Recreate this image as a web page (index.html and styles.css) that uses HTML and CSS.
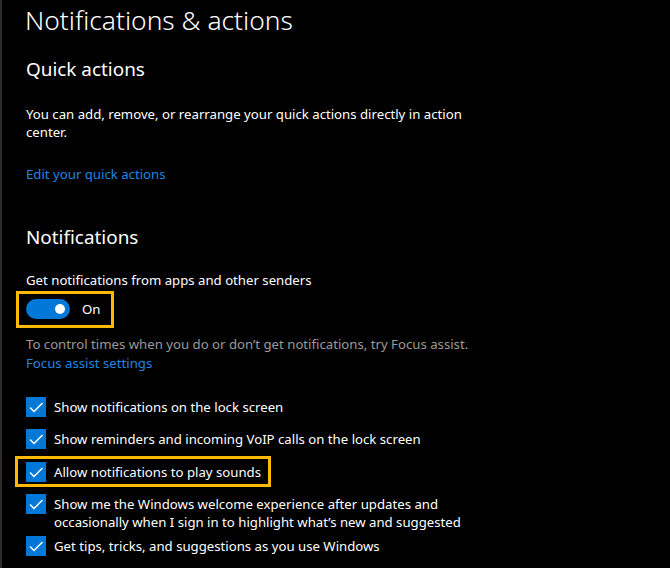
FILE: index.html
```html
<!DOCTYPE html>
<html>
<head>
<meta charset="utf-8">
<link rel="stylesheet" href="styles.css">
</head>
<body>
<div class="page">
  <h1 class="title">Notifications &amp; actions</h1>
  <h2 class="heading h-quick">Quick actions</h2>
  <p class="text para">You can add, remove, or rearrange your quick actions directly in action center.</p>
  <a class="link edit-link">Edit your quick actions</a>
  <h2 class="heading h-notif">Notifications</h2>
  <p class="text get">Get notifications from apps and other senders</p>
  <div class="toggle-wrap highlight">
    <span class="toggle"><span class="knob"></span></span>
    <span class="text on">On</span>
  </div>
  <p class="text muted">To control times when you do or don’t get notifications, try Focus assist.</p>
  <a class="link focus-link">Focus assist settings</a>
  <ul class="checks">
    <li class="check"><span class="box"><svg viewBox="0 0 20 20" width="20" height="20"><path d="M4 10.5 L8 14.5 L16.5 6" fill="none" stroke="#fff" stroke-width="1.5"/></svg></span><span class="text">Show notifications on the lock screen</span></li>
    <li class="check"><span class="box"><svg viewBox="0 0 20 20" width="20" height="20"><path d="M4 10.5 L8 14.5 L16.5 6" fill="none" stroke="#fff" stroke-width="1.5"/></svg></span><span class="text">Show reminders and incoming VoIP calls on the lock screen</span></li>
    <li class="check highlight sounds"><span class="box"><svg viewBox="0 0 20 20" width="20" height="20"><path d="M4 10.5 L8 14.5 L16.5 6" fill="none" stroke="#fff" stroke-width="1.5"/></svg></span><span class="text">Allow notifications to play sounds</span></li>
    <li class="check multi"><span class="box"><svg viewBox="0 0 20 20" width="20" height="20"><path d="M4 10.5 L8 14.5 L16.5 6" fill="none" stroke="#fff" stroke-width="1.5"/></svg></span><span class="text">Show me the Windows welcome experience after updates and occasionally when I sign in to highlight what’s new and suggested</span></li>
    <li class="check"><span class="box"><svg viewBox="0 0 20 20" width="20" height="20"><path d="M4 10.5 L8 14.5 L16.5 6" fill="none" stroke="#fff" stroke-width="1.5"/></svg></span><span class="text">Get tips, tricks, and suggestions as you use Windows</span></li>
  </ul>
</div>
</body>
</html>
```
FILE: styles.css
```css
html, body {
  margin: 0;
  padding: 0;
  background: #000;
  height: 100%;
  overflow: hidden;
}
.page {
  border-left: 2px solid #2b2b2b;
  min-height: 568px;
  box-sizing: border-box;
  padding: 0 0 0 24px;
  color: #fff;
  font-family: "Noto Sans", "Open Sans", sans-serif;
  display: flex;
  flex-direction: column;
  align-items: flex-start;
}
.title {
  font-weight: 300;
  font-size: 26.4px;
  line-height: 36px;
  margin: 2px 0 0 -1px;
}
.heading {
  font-weight: 400;
  font-size: 18.9px;
  line-height: 28px;
  margin: 0;
}
.h-quick { margin-top: 17px; }
.h-notif { margin-top: 40px; }
.text {
  font-size: 13.2px;
  line-height: 18px;
  margin: 0;
}
.para { width: 450px; margin-top: 22px; }
.link {
  color: #2186e0;
  font-size: 13.2px;
  line-height: 18px;
}
.edit-link { margin-top: 24px; }
.get { margin-top: 20px; }
.highlight {
  border: 3px solid #ffb900;
}
.toggle-wrap {
  display: flex;
  align-items: center;
  margin: 2px 0 0 -10px;
  padding: 5px 11px 6px 7px;
  gap: 12px;
}
.toggle {
  width: 44px;
  height: 20px;
  border-radius: 10px;
  background: #0078d7;
  display: flex;
  align-items: center;
  justify-content: flex-end;
  padding-right: 5px;
  box-sizing: border-box;
}
.knob {
  width: 10px;
  height: 10px;
  border-radius: 50%;
  background: #fff;
}
.muted { color: #9a9a9a; margin-top: 7px; }
.focus-link { margin-top: 1px; }
.checks {
  list-style: none;
  margin: 25px 0 0 0;
  padding: 0;
  display: flex;
  flex-direction: column;
  align-items: flex-start;
  gap: 12px;
}
.check {
  display: flex;
  align-items: flex-start;
  gap: 8px;
}
.check .text { padding-top: 1px; max-width: 420px; }
.box {
  flex: none;
  width: 20px;
  height: 20px;
  background: #0078d7;
  display: block;
}
.box svg { display: block; }
.sounds {
  margin: -5px 0 -5px -11px;
  padding: 3px 7px 2px 8px;
}
.multi { margin-bottom: -7px; }
```
